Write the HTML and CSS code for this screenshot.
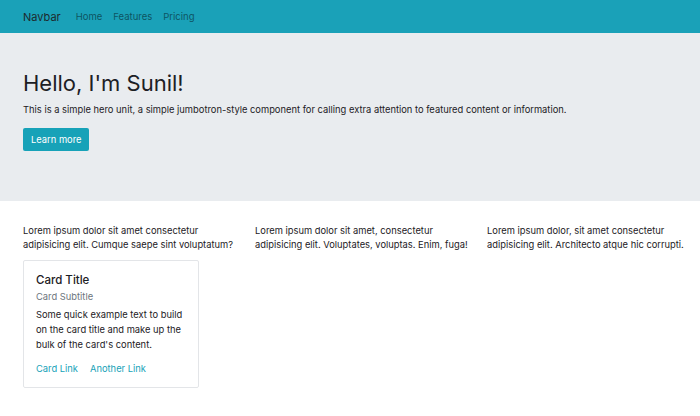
FILE: index.html
```html
<!DOCTYPE html>
<html>
<head>
<meta charset="utf-8">
<link rel="stylesheet" href="styles.css">
</head>
<body>
<nav class="navbar">
  <a class="brand" href="#">Navbar</a>
  <ul class="nav-links">
    <li><a href="#">Home</a></li>
    <li><a href="#">Features</a></li>
    <li><a href="#">Pricing</a></li>
  </ul>
</nav>
<section class="hero">
  <h1>Hello, I'm Sunil!</h1>
  <p>This is a simple hero unit, a simple jumbotron-style component for calling extra attention to featured content or information.</p>
  <a class="btn" href="#">Learn more</a>
</section>
<main class="content">
  <div class="row">
    <div class="col">
      <p>Lorem ipsum dolor sit amet consectetur adipisicing elit. Cumque saepe sint voluptatum?</p>
      <div class="card">
        <h5 class="card-title">Card Title</h5>
        <h6 class="card-subtitle">Card Subtitle</h6>
        <p class="card-text">Some quick example text to build on the card title and make up the bulk of the card's content.</p>
        <div class="card-links">
          <a href="#">Card Link</a>
          <a href="#">Another Link</a>
        </div>
      </div>
    </div>
    <div class="col">
      <p>Lorem ipsum dolor sit amet, consectetur adipisicing elit. Voluptates, voluptas. Enim, fuga!</p>
    </div>
    <div class="col">
      <p>Lorem ipsum dolor, sit amet consectetur adipisicing elit. Architecto atque hic corrupti.</p>
    </div>
  </div>
</main>
</body>
</html>
```
FILE: styles.css
```css
* { box-sizing: border-box; }
html, body { margin: 0; padding: 0; }
body {
  font-family: Inter, "Noto Sans", sans-serif;
  font-size: 9.35px;
  line-height: 14px;
  color: #1c2024;
  background: #fff;
}
a { text-decoration: none; }
.navbar {
  background: #1aa1b8;
  height: 33px;
  display: flex;
  align-items: center;
  padding: 0 23px;
}
.brand {
  color: #1d2a2e;
  font-size: 11px;
  margin-right: 15px;
}
.nav-links {
  list-style: none;
  margin: 0;
  padding: 0;
  display: flex;
  gap: 11px;
}
.nav-links a {
  color: rgba(0, 0, 0, 0.5);
  font-size: 9.5px;
}
.hero {
  background: #e9ecef;
  height: 168px;
  padding: 37px 23px 0;
}
.hero h1 {
  margin: 0 0 6px;
  font-size: 22px;
  font-weight: 400;
  line-height: 27px;
}
.hero p {
  margin: 0 0 11px;
  line-height: 14px;
}
.btn {
  display: inline-block;
  background: #17a2b8;
  color: #fff;
  padding: 5px 8px;
  border-radius: 2px;
  line-height: 13px;
}
.content {
  padding: 23px 23px 0;
}
.row {
  display: grid;
  grid-template-columns: repeat(3, 220px);
  column-gap: 12px;
}
.col p {
  margin: 0 0 8px;
}
.card {
  width: 176px;
  border: 1px solid #e3e5e8;
  border-radius: 2px;
  padding: 12px 12px 11px 12px;
}
.card-title {
  margin: 0 0 1.5px;
  font-size: 11.5px;
  font-weight: 500;
  line-height: 15px;
}
.card-subtitle {
  margin: 0 0 3.5px;
  font-size: 9.35px;
  font-weight: 400;
  color: #6c757d;
  line-height: 14px;
}
.card .card-text {
  margin: 0 0 9.5px;
  line-height: 15px;
}
.card-links { display: flex; gap: 12px; }
.card-links a { color: #17a2b8; }
```
